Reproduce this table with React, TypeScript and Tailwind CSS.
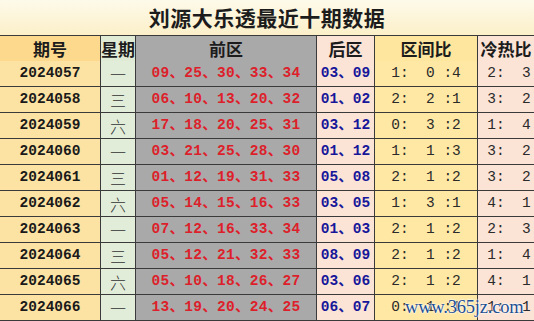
import React from "react";

type Row = {
  issue: string;
  week: string;
  front: string[];
  back: string[];
  zone: string;
  hot: string;
};

const rows: Row[] = [
  { issue: "2024057", week: "一", front: ["09", "25", "30", "33", "34"], back: ["03", "09"], zone: "1:  0 :4", hot: "2:  3" },
  { issue: "2024058", week: "三", front: ["06", "10", "13", "20", "32"], back: ["01", "02"], zone: "2:  2 :1", hot: "3:  2" },
  { issue: "2024059", week: "六", front: ["17", "18", "20", "25", "31"], back: ["03", "12"], zone: "0:  3 :2", hot: "1:  4" },
  { issue: "2024060", week: "一", front: ["03", "21", "25", "28", "30"], back: ["01", "12"], zone: "1:  1 :3", hot: "3:  2" },
  { issue: "2024061", week: "三", front: ["01", "12", "19", "31", "33"], back: ["05", "08"], zone: "2:  1 :2", hot: "3:  2" },
  { issue: "2024062", week: "六", front: ["05", "14", "15", "16", "33"], back: ["03", "05"], zone: "1:  3 :1", hot: "4:  1" },
  { issue: "2024063", week: "一", front: ["07", "12", "16", "33", "34"], back: ["01", "03"], zone: "2:  1 :2", hot: "2:  3" },
  { issue: "2024064", week: "三", front: ["05", "12", "21", "32", "33"], back: ["08", "09"], zone: "2:  1 :2", hot: "1:  4" },
  { issue: "2024065", week: "六", front: ["05", "10", "18", "26", "27"], back: ["03", "06"], zone: "2:  1 :2", hot: "4:  1" },
  { issue: "2024066", week: "一", front: ["13", "19", "20", "24", "25"], back: ["06", "07"], zone: "0:  1 :1", hot: "1:  1" },
];

const cjk = "font-['Noto_Sans_CJK_SC',sans-serif]";
const mono = "font-['Liberation_Mono','Noto_Sans_CJK_SC',monospace]";
const cell = "flex items-center justify-center border-r border-b border-[#3a3a3a] whitespace-pre";
const cols = "grid grid-cols-[101px_35px_181px_58px_103px_56px]";

export default function App() {
  return (
    <div className="relative w-[534px] h-[321px] overflow-hidden bg-white">
      <div
        className={`h-[36px] flex items-center justify-center border-b border-[#3a3a3a] bg-gradient-to-b from-[#fefaea] to-[#fcf0c9] ${cjk} text-[21px] font-bold text-[#1c1c1c] tracking-[0.5px]`}
      >
        刘源大乐透最近十期数据
      </div>
      <div className={`${cols} h-[25px] ${cjk} text-[17px] font-bold text-[#1c1c1c]`}>
        <div className={`${cell} bg-[#fcd98c]`}>期号</div>
        <div className={`${cell} bg-[#e0ebd6]`}>星期</div>
        <div className={`${cell} bg-[#a9a9a9]`}>前区</div>
        <div className={`${cell} bg-[#fbe3d6]`}>后区</div>
        <div className={`${cell} bg-[#fee69e]`}>区间比</div>
        <div className={`${cell} border-r-0 bg-[#fbe3d6]`}>冷热比</div>
      </div>
      {rows.map((r) => (
        <div key={r.issue} className={`${cols} h-[26px]`}>
          <div className={`${cell} bg-[#fde3a3] ${mono} text-[14.5px] font-bold text-[#1a1a1a] pt-[1px]`}>
            {r.issue}
          </div>
          <div className={`${cell} bg-[#e2edd9] ${cjk} text-[16px] font-light text-[#333]`}>{r.week}</div>
          <div className={`${cell} bg-[#a9a9a9] ${mono} text-[14.5px] font-bold text-[#dd1f2b] tracking-[0.3px] pt-[1px]`}>
            {r.front.join("、")}
          </div>
          <div className={`${cell} bg-[#fbe3d6] ${mono} text-[14.5px] font-bold text-[#17179a] pt-[1px]`}>
            {r.back.join("、")}
          </div>
          <div className={`${cell} bg-[#fee8a4] ${mono} text-[14.5px] text-[#2a2a2a] pt-[1px]`}>{r.zone}</div>
          <div className={`${cell} border-r-0 bg-[#fbe3d6] ${mono} text-[14.5px] text-[#2a2a2a] pl-[6px] pt-[1px]`}>
            {r.hot}
          </div>
        </div>
      ))}
      <div className="absolute left-[405px] top-[294px] font-['Liberation_Serif',serif] text-[18.5px] text-[#1f4f8f] tracking-[-0.2px] [text-shadow:0_0_2px_#fff,0_0_2px_#fff,0_0_1px_#fff]">
        www.365jz.com
      </div>
    </div>
  );
}
